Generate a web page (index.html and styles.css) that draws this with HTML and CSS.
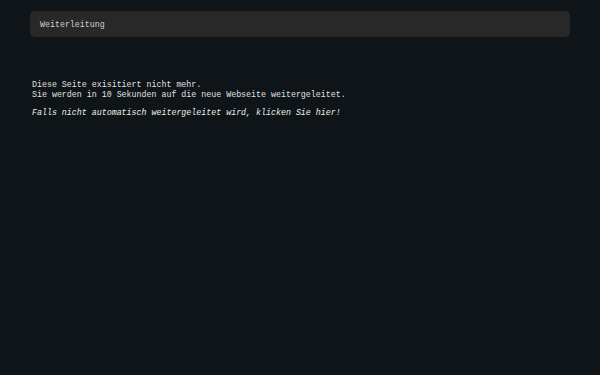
FILE: index.html
```html
<!DOCTYPE html>
<html lang="de">
<head>
<meta charset="utf-8">
<title>Weiterleitung</title>
<link rel="stylesheet" href="styles.css">
</head>
<body>
<header class="bar"><span class="bar-title">Weiterleitung</span></header>
<main class="content">
<p class="msg">Diese Seite exisitiert nicht mehr.<br>Sie werden in 10 Sekunden auf die neue Webseite weitergeleitet.</p>
<p class="hint"><a href="#">Falls nicht automatisch weitergeleitet wird, klicken Sie hier!</a></p>
</main>
</body>
</html>
```
FILE: styles.css
```css
html, body {
  margin: 0;
  padding: 0;
  background: #0f1418;
  height: 100%;
}
body {
  font-family: "Liberation Mono", "Courier New", monospace;
  font-size: 8.3px;
  color: #e0e0e0;
}
.bar {
  margin: 11px 30px 0;
  height: 26px;
  background: #282828;
  border-radius: 5px;
  display: flex;
  align-items: center;
  padding-left: 10px;
}
.bar-title {
  color: #cfcfcf;
}
.content {
  padding: 0 32px;
  margin-top: 43px;
}
.msg {
  margin: 0;
  line-height: 9.6px;
}
.hint {
  margin: 9px 0 0;
  line-height: 10px;
}
.hint a {
  color: #f0f0e4;
  font-style: italic;
  text-decoration: none;
}
```
